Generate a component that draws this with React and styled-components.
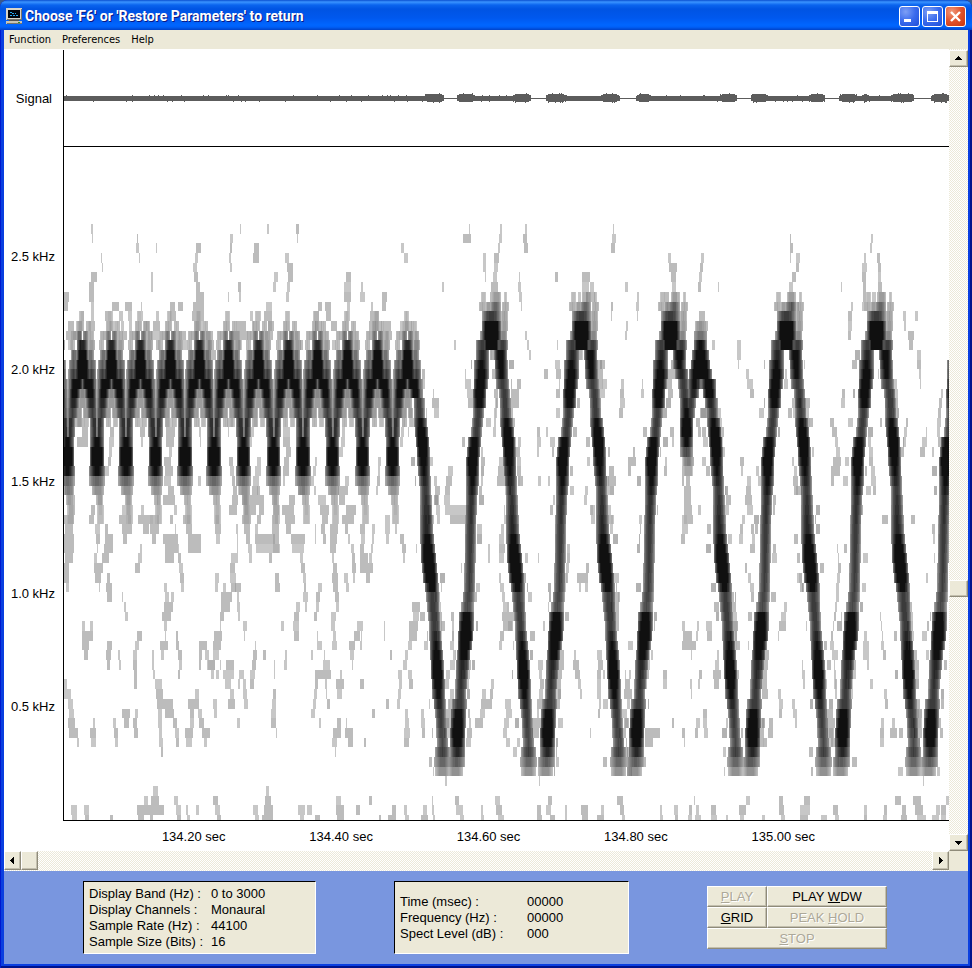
import React from "react";
import styled, { createGlobalStyle } from "styled-components";

const GlobalStyle = createGlobalStyle`
  * {
    box-sizing: border-box;
  }
  body {
    margin: 0;
    background: #3a5a8c;
    font-family: "Liberation Sans", Arial, sans-serif;
    font-size: 13px;
    line-height: 16px;
    color: #000;
  }
  button {
    font: inherit;
    color: inherit;
    border-radius: 0;
    padding: 0;
  }
`;

const Window = styled.div`
  display: flex;
  flex-direction: column;
  min-height: 100vh;
  padding: 0 4px 4px;
  border-radius: 8px 8px 0 0;
  background: #0a3fe0;
  box-shadow: inset 1px 0 #0019cf, inset -2px 0 #00138c, inset 0 -2px #00138c;
`;

const TitleBar = styled.header`
  display: flex;
  align-items: center;
  height: 30px;
  margin: 0 -4px;
  padding: 2px 6px 0 6px;
  border-radius: 8px 8px 0 0;
  background: linear-gradient(
    #0a4fd0 0,
    #3a93ff 2px,
    #0a64ee 5px,
    #0054e3 9px,
    #0058ee 18px,
    #0066ff 25px,
    #0060f8 27px,
    #0042c8 30px
  );
`;

const Title = styled.h1`
  flex: 1;
  margin: 0;
  padding-left: 3px;
  font-family: Roboto, sans-serif;
  font-size: 14px;
  font-weight: bold;
  line-height: 20px;
  color: #fff;
  text-shadow: 1px 1px #0a1883;
`;

const Caption = styled.button`
  width: 21px;
  height: 21px;
  margin-left: 2px;
  border: 1px solid #fff;
  border-radius: 3px;
  background: ${(p) =>
    p.$close
      ? "radial-gradient(circle at 30% 25%, #f0997c, #e1522c 50%, #c8340e)"
      : "radial-gradient(circle at 30% 25%, #7d9ff5, #3a6bed 50%, #1f4fd8)"};
  svg {
    display: block;
  }
`;

const MenuBar = styled.nav`
  display: flex;
  gap: 11px;
  height: 19px;
  padding-left: 5px;
  background: #ece9d8;
  button {
    border: 0;
    background: none;
    font-family: "DejaVu Sans Condensed", "DejaVu Sans", sans-serif;
    font-size: 11px;
    line-height: 18px;
  }
`;

const Workspace = styled.main`
  display: grid;
  flex: 1;
  grid-template-columns: minmax(0, 1fr) 19px;
  grid-template-rows: 1fr 20px;
  background: #ece9d8;
`;

const Display = styled.section`
  display: grid;
  grid-template-columns: 59px minmax(0, 1fr);
  grid-template-rows: 97px minmax(480px, 1fr) 30px;
  padding-top: 1px;
  background: #fff;
`;

const SignalLabel = styled.div`
  align-self: center;
  padding-right: 11px;
  text-align: right;
`;

const Plot = styled.div`
  min-width: 0;
  min-height: 0;
  border-left: 1px solid #000;
  border-bottom: 1px solid #000;
  svg {
    display: block;
    width: 100%;
    height: 0;
    min-height: 100%;
  }
`;

const FrequencyAxis = styled.div`
  display: grid;
  grid-auto-rows: 1fr;
  align-items: center;
  padding: 54px 8px 58px 0;
  text-align: right;
`;

const TimeAxis = styled.div`
  grid-column: 2;
  display: grid;
  grid-template-columns: repeat(5, 1fr);
  align-items: center;
  padding: 2px 92px 0 57px;
  text-align: center;
  white-space: nowrap;
`;

const Track = styled.div`
  display: flex;
  flex-direction: ${(p) => (p.$vertical ? "column" : "row")};
  justify-content: space-between;
  padding-top: ${(p) => (p.$vertical ? "1px" : "0")};
  background: repeating-conic-gradient(#fff 0 25%, #ece9d8 0 50%) 0 0 / 2px 2px;
`;

const raised = `
  border: 1px solid;
  border-color: #fff #8f8b7a #8f8b7a #fff;
  background: #ece9d8;
  box-shadow: inset -1px -1px #c3bfae;
`;

const ScrollButton = styled.button`
  ${raised}
  display: flex;
  align-items: center;
  justify-content: center;
  flex: none;
  width: ${(p) => (p.$vertical ? "19px" : "17px")};
  height: ${(p) => (p.$vertical ? "17px" : "19px")};
`;

const Thumb = styled.div`
  ${raised}
  width: ${(p) => (p.$vertical ? "19px" : "17px")};
  height: ${(p) => (p.$vertical ? "17px" : "19px")};
`;

const Travel = styled.div`
  display: flex;
  flex: 1;
  flex-direction: ${(p) => (p.$vertical ? "column" : "row")};
  &::before {
    content: "";
    flex: ${(p) => p.$before};
  }
  &::after {
    content: "";
    flex: ${(p) => p.$after};
  }
`;

const Footer = styled.footer`
  display: grid;
  grid-template-columns: 233px 235px 180px;
  justify-content: start;
  gap: 78px;
  height: 93px;
  padding: 10px 0 0 79px;
  background: #7996df;
`;

const Readout = styled.dl`
  display: grid;
  grid-template-columns: ${(p) => p.$label} 1fr;
  grid-auto-rows: 16px;
  align-content: center;
  height: 73px;
  margin: 0;
  padding-left: 5px;
  border: 1px solid;
  border-color: #000 #fff #fff #000;
  background: #ece9d8;
  white-space: nowrap;
  dd {
    margin: 0;
  }
`;

const Controls = styled.div`
  display: grid;
  grid-template-columns: 60px 120px;
  grid-auto-rows: 21px;
  align-content: start;
  padding-top: 5px;
`;

const ControlButton = styled.button`
  ${raised}
  grid-column: ${(p) => (p.$wide ? "span 2" : "auto")};
  &:disabled {
    color: #aca899;
    text-shadow: 1px 1px #fff;
  }
`;

const SIGNAL_BASE = 48;
const PLOT_WIDTH = 885;
const PLOT_HEIGHT = 673;
const ROWS = 62;
const SHADES = 18;

const random = (seed) => () => {
  seed = (seed * 1664525 + 1013904223) % 4294967296;
  return seed / 4294967296;
};

// [row, [centre offset, half width, strength], ...] around one small arch
const ARCH = {
  9: [[-1, 2, 0.1]],
  10: [[-2, 3, 0.2], [6, 2, 0.15]],
  11: [[-8, 3, 0.2], [-3, 2, 0.5], [3, 2, 0.5], [8, 3, 0.2]],
  12: [[0, 5, 0.9], [-10, 2, 0.15], [9, 3, 0.3]],
  13: [[0, 5, 1.3], [-8, 3, 0.5], [8, 3, 0.5]],
  14: [[0, 6, 1.5], [-9, 4, 0.6], [9, 4, 0.6]],
  15: [[0, 8, 1.2], [-9, 4, 0.75], [9, 4, 0.75]],
  16: [[-6, 6, 1.3], [6, 6, 1.3], [-12, 3, 0.5], [12, 3, 0.5], [0, 2, 0.5]],
  17: [[-8, 5, 1.1], [8, 5, 1.1], [-13, 2, 0.5], [13, 2, 0.5], [0, 3, 0.4]],
  18: [[-9, 5, 0.9], [9, 5, 0.9], [-13, 2, 0.5], [13, 2, 0.5], [0, 4, 0.3]],
  19: [[-10, 5, 0.75], [10, 5, 0.75], [-3, 2, 0.3], [3, 2, 0.3]],
  20: [[-12, 4, 0.85], [12, 4, 0.85], [-3, 2, 0.15], [4, 2, 0.12]],
  21: [[-13, 5, 0.85], [13, 5, 0.85]],
  22: [[-15, 6, 1], [15, 6, 1]],
  23: [[-15, 6, 1.5], [15, 6, 1.5]],
  24: [[-15, 6, 1.5], [15, 6, 1.5]],
  25: [[-15, 7, 1], [15, 7, 1]],
  26: [[-15, 7, 0.55], [15, 7, 0.55]],
  27: [[-14, 5, 0.35], [16, 5, 0.35]],
  28: [[17, 3, 0.2]],
  29: [[18, 3, 0.15]],
  30: [[18, 3, 0.12]],
};

const CREST = {
  7: [[-8, 2, 0.12], [5, 4, 0.2], [14, 1, 0.1]],
  8: [[-9, 3, 0.2], [-3, 2, 0.3], [4, 5, 0.55], [14, 3, 0.2]],
  9: [[0, 9, 0.8], [13, 3, 0.25]],
  10: [[0, 9, 1.4], [13, 3, 0.3]],
  11: [[0, 9, 1.5], [-9, 2, 0.4], [12, 3, 0.4]],
  12: [[0, 8, 1.3], [-9, 6, 0.8], [11, 5, 0.8]],
};

// [row, x offset, half width, strength] down either side of a tall crest
const RISING = [
  [13, -9, 6, 0.9], [14, -10, 7, 1], [15, -10, 7, 1.1], [17, -12, 6, 1.3],
  [18, -12, 6, 1.1], [19, -13, 5, 0.8], [21, -15, 5, 0.8], [22, -17, 6, 1.1],
  [24, -19, 6, 1.4], [26, -19, 6, 1], [28, -20, 5, 0.85], [31, -21, 5, 0.8],
  [37, -22, 5, 0.75], [39, -24, 6, 0.7], [40, -25, 7, 1.1], [42, -26, 7, 1.4],
  [44, -28, 6, 1.1], [45, -29, 6, 0.9], [48, -31, 5, 0.8], [49, -32, 7, 0.8],
  [50, -33, 7, 1.1], [52, -34, 7, 1.4], [54, -34, 7, 0.9], [55, -35, 8, 0.6],
  [56, -36, 7, 0.35],
];
const FALLING = [
  [13, 9, 6, 1.1], [15, 10, 6, 1], [16, 11, 6, 0.8], [17, 13, 5, 0.8],
  [19, 14, 5, 0.8], [20, 15, 6, 1], [22, 17, 6, 1.4], [24, 18, 6, 1.1],
  [27, 20, 5, 0.8], [31, 21, 6, 0.9], [34, 23, 7, 1.4], [36, 25, 7, 1.3],
  [38, 27, 6, 0.8], [41, 29, 5, 0.8], [44, 31, 6, 1.1], [46, 32, 6, 1.4],
  [48, 33, 6, 1], [50, 35, 5, 0.8], [53, 37, 5, 0.7], [54, 37, 7, 0.75],
  [55, 37, 8, 0.55], [56, 37, 7, 0.35],
];

const SMALL_CRESTS = [-12, 18, 47, 76, 106, 135, 164, 194, 224, 253, 283, 313, 343];
const TALL_CRESTS = [427, 517, 606, 722, 812];
const RISES = [427, 517, 606, 722, 812, 900];
const FALLS = [341, 427, 517, 634, 722, 812];

// faint echoes: x origin, then [first row, x, width, x, width, ...] going down
const ECHOES = [
  [-4, [
    [0, 31, 2, 32, 1], [0, 180, 1], [0, 207, 2], [0, 236, 3, 237, 1], [1, 170, 3, 170, 2, 169, 2, 170, 2],
    [1, 77, 1, 76, 3, 79, 1], [2, 96, 1], [2, 194, 5, 193, 6], [3, 41, 1, 42, 1],
    [2, 136, 5, 135, 3, 133, 4, 134, 4, 136, 4, 136, 8, 133, 11, 132, 12, 134, 9],
    [3, 225, 4, 227, 6, 228, 5, 227, 3, 226, 3], [5, 31, 6, 29, 5, 29, 5, 31, 3, 31, 3, 29, 6],
    [5, 91, 2, 91, 2], [5, 214, 4, 213, 3], [6, 178, 3, 179, 2], [7, 168, 1], [7, 4, 5, 4, 4],
    [5, 286, 5, 284, 7, 284, 7, 287, 3, 286, 4], [8, 52, 7, 45, 6, 50, 5], [8, 65, 7, 68, 4, 69, 3],
    [8, 110, 5, 110, 6], [8, 118, 5], [8, 206, 6, 204, 8, 208, 6], [8, 81, 1, 82, 1, 83, 7, 88, 5],
    [8, 258, 4, 253, 6, 255, 7], [8, 265, 6, 266, 5, 271, 6], [9, 21, 3, 16, 6, 14, 7, 17, 4],
    [9, 59, 4, 61, 3, 62, 5], [9, 96, 3, 93, 7, 91, 8, 96, 4], [10, 8, 6, 6, 8, 8, 5, 12, 2],
    [10, 176, 10, 174, 14, 178, 4, 186, 3], [9, 190, 3, 192, 2], [9, 199, 2, 208, 4, 205, 8],
    [11, 119, 7, 123, 4], [11, 146, 7, 148, 6, 150, 6], [11, 235, 5, 240, 3], [12, 272, 4, 277, 2],
    [20, 105, 8, 106, 9, 106, 8, 109, 3, 104, 7, 105, 8, 104, 7], [20, 80, 3, 80, 5, 81, 2],
    [20, 15, 10, 22, 6, 17, 11], [20, 138, 2, 139, 2, 140, 1], [20, 167, 6, 168, 1],
    [20, 192, 5, 191, 3, 190, 2], [21, 50, 4, 49, 5, 49, 3, 48, 3, 45, 4], [24, 197, 4, 195, 6, 193, 6, 192, 6],
    [24, 169, 4, 170, 4, 172, 3, 173, 4, 172, 6, 169, 8], [21, 223, 7, 223, 7, 226, 5, 224, 5, 223, 6, 223, 2],
    [21, 282, 3, 281, 4, 279, 4], [24, 255, 2, 253, 3, 251, 3, 254, 2], [26, 138, 3],
    [27, 5, 8, 7, 8, 9, 6, 4, 10, 5, 8, 4, 10, 4, 10, 5, 8, 4, 5, 4, 5, 6, 3],
    [27, 108, 6, 103, 12, 114, 3, 110, 3], [27, 178, 2, 182, 8, 184, 12, 182, 9, 184, 6, 186, 4, 188, 4, 189, 3],
    [27, 197, 3, 190, 14, 199, 5, 197, 4, 195, 3, 195, 20, 196, 24],
    [27, 238, 7, 229, 6, 222, 12, 225, 10, 226, 5, 231, 14, 232, 12, 240, 3, 241, 4, 243, 3, 244, 2, 243, 5, 245, 2],
    [26, 285, 4, 278, 10, 279, 6, 286, 10, 282, 12, 285, 3, 288, 2, 291, 3, 292, 3, 292, 4, 293, 2],
    [28, 38, 4, 31, 4, 29, 5, 35, 5, 36, 4, 37, 1, 34, 3, 34, 9, 35, 6, 39, 1],
    [28, 66, 5, 62, 8, 59, 12, 62, 10, 63, 4], [28, 97, 3, 81, 3, 78, 15, 83, 6],
    [28, 258, 8, 260, 9, 262, 6, 261, 4, 263, 3], [28, 212, 5, 213, 6, 212, 6, 212, 7, 213, 6, 213, 6, 209, 3],
    [30, 155, 4, 155, 6, 156, 4], [30, 90, 9, 90, 9, 92, 4], [30, 123, 8, 126, 6, 128, 13, 128, 13],
    [31, 45, 3, 45, 8, 44, 9, 42, 7], [36, 47, 3, 46, 6, 47, 5], [33, 80, 2, 78, 4, 75, 5],
    [31, 115, 1, 103, 15, 105, 13, 105, 9], [33, 118, 1, 118, 3, 119, 4, 120, 4, 121, 3],
    [38, 62, 1, 64, 2, 65, 3], [36, 155, 4, 155, 3],
    [31, 176, 2, 177, 1, 177, 1, 171, 7, 170, 5, 170, 6, 171, 5, 161, 11, 161, 9, 160, 4, 160, 1, 154, 8, 153, 8, 153, 6, 148, 7, 151, 3],
    [37, 163, 3], [37, 175, 6, 177, 2, 177, 3, 178, 2], [45, 160, 1, 156, 3], [36, 215, 4, 215, 5],
    [37, 258, 4, 256, 4, 256, 3, 254, 3],
    [31, 270, 8, 270, 7, 270, 6, 272, 2, 273, 4, 272, 6, 273, 5, 275, 4, 276, 3, 271, 5, 271, 4, 273, 3, 272, 5],
    [31, 255, 1, 255, 1], [36, 284, 4, 286, 3], [37, 104, 3, 105, 4, 104, 9, 102, 9, 104, 3, 105, 1, 100, 8, 101, 3],
    [38, 111, 3], [42, 116, 2, 116, 3, 118, 4, 119, 3, 118, 2], [41, 22, 3, 22, 11, 22, 7, 24, 4], [41, 30, 3],
    [43, 47, 5, 46, 5, 47, 3], [44, 58, 2, 59, 2], [42, 77, 5, 75, 4, 73, 4, 73, 4, 74, 3, 74, 3],
    [44, 92, 2, 92, 2, 93, 2, 95, 7, 96, 7, 97, 16, 98, 4, 98, 4, 99, 3, 99, 4, 101, 2],
    [50, 105, 9, 113, 4, 115, 4, 116, 3], [48, 135, 4, 128, 11, 130, 4, 130, 4, 125, 8, 126, 6],
    [50, 138, 4, 139, 5, 142, 8, 144, 3], [49, 153, 4, 154, 3], [51, 177, 3],
    [47, 4, 3, 4, 7, 8, 5, 9, 5, 8, 7, 9, 9, 17, 2], [51, 33, 2, 30, 6, 31, 5], [50, 62, 8, 64, 5],
    [50, 75, 3, 73, 4, 74, 4], [51, 53, 3, 54, 4, 55, 3], [43, 139, 8, 139, 3, 139, 2], [44, 145, 4, 147, 8],
    [45, 166, 8, 163, 11, 165, 6, 170, 4, 168, 7], [46, 179, 5, 178, 2], [47, 183, 3, 183, 4, 184, 4],
    [43, 195, 1, 193, 4, 192, 4, 190, 5, 190, 4], [44, 203, 3], [41, 221, 3], [44, 225, 2, 224, 3],
    [45, 214, 1, 214, 1], [39, 236, 4, 234, 5, 233, 6, 234, 5], [41, 183, 4, 184, 1],
    [42, 257, 1, 257, 5, 251, 2], [44, 264, 1, 263, 7, 255, 16, 255, 3, 254, 3, 253, 3, 251, 4], [47, 265, 2, 266, 1, 267, 3],
    [46, 280, 2, 276, 8, 277, 5], [48, 213, 3, 212, 4, 211, 5, 211, 5, 216, 1],
    [51, 277, 4, 273, 8, 272, 5, 275, 1], [51, 286, 1, 285, 8, 288, 5], [51, 259, 2],
    [41, 297, 3, 294, 6, 289, 6, 290, 4, 292, 1], [58, 93, 5, 91, 8, 84, 20, 90, 3], [59, 84, 4, 77, 7, 78, 6],
    [60, 11, 6, 12, 5], [60, 24, 5, 25, 4], [61, 50, 3], [59, 114, 4, 116, 5, 117, 4], [60, 126, 2, 127, 3],
    [60, 136, 3], [59, 153, 5, 155, 5, 157, 4], [58, 206, 3, 205, 6, 204, 9, 202, 11], [60, 193, 5, 195, 4],
    [60, 238, 7, 240, 4], [60, 247, 5, 255, 5], [59, 276, 5, 276, 8, 277, 7], [60, 296, 4],
  ]],
  [296, [
    [0, 109, 1, 103, 8], [0, 140, 2, 139, 3, 138, 2, 134, 5, 134, 4, 133, 4, 131, 7, 130, 10],
    [2, 41, 3, 44, 4], [3, 123, 3, 123, 3, 125, 1], [0, 165, 2, 163, 4, 164, 4], [0, 253, 1, 252, 4, 251, 4],
    [6, 82, 2], [5, 159, 1, 158, 3, 159, 3, 161, 1], [6, 1, 2, 0, 5], [7, 22, 5, 22, 4], [8, 11, 2, 10, 9, 9, 13],
    [5, 222, 8, 222, 7, 226, 9], [6, 230, 4, 218, 3], [5, 195, 3], [6, 265, 3], [7, 277, 2, 276, 3, 277, 1],
    [8, 251, 2, 251, 1], [10, 266, 2, 265, 2], [9, 46, 1, 45, 7], [10, 40, 2], [10, 26, 5, 26, 6],
    [10, 56, 1, 55, 4, 54, 5], [11, 165, 2, 167, 2, 169, 2], [12, 94, 2], [12, 197, 1], [15, 184, 4],
    [15, 105, 1, 105, 6, 107, 6, 108, 5], [16, 157, 4, 151, 8, 150, 9, 150, 3], [14, 238, 7, 238, 5, 239, 4, 240, 5],
    [17, 73, 1, 72, 7, 74, 5], [15, 62, 3, 63, 2], [16, 261, 3, 260, 4, 260, 5, 259, 4], [16, 282, 1, 281, 3],
    [21, 177, 3, 177, 4, 177, 2], [21, 186, 2], [23, 273, 2, 268, 8, 268, 3], [24, 69, 4],
    [25, 88, 5, 86, 6, 85, 5, 84, 6, 85, 22, 90, 15], [26, 74, 3, 75, 5, 75, 4, 76, 4, 77, 3],
    [29, 68, 3, 68, 4], [18, 135, 2, 135, 1, 134, 2, 133, 3], [24, 139, 4, 138, 8, 137, 12, 145, 6],
    [22, 158, 3, 157, 3, 157, 4, 157, 4, 158, 5], [26, 178, 3], [26, 188, 2], [26, 246, 10, 247, 3],
    [27, 225, 3, 224, 3], [24, 18, 3, 18, 2, 17, 3, 16, 2], [20, 42, 3, 41, 3, 40, 3], [21, 48, 1],
    [29, 144, 1, 144, 3], [29, 230, 3, 231, 4], [29, 248, 3, 249, 4],
    [31, 0, 5, 1, 4, 0, 4, 0, 8, 0, 13, 6, 4], [31, 12, 3, 12, 2, 11, 2, 9, 3], [30, 25, 5, 25, 5, 26, 3],
    [31, 35, 2, 40, 4, 42, 4, 43, 2], [39, 52, 8, 53, 6, 49, 9, 49, 8, 48, 4], [41, 24, 1, 24, 1],
    [41, 0, 3, 1, 1, 0, 2], [44, 30, 2], [44, 45, 3, 43, 4, 38, 4, 39, 3, 38, 3, 37, 3], [46, 48, 4, 49, 4],
    [47, 0, 4], [49, 26, 3, 45, 3, 45, 4, 44, 6, 44, 5], [50, 12, 3], [50, 61, 3, 61, 4, 62, 3], [53, 4, 2],
    [47, 131, 3, 130, 3, 121, 11, 120, 5, 115, 8], [48, 122, 4], [49, 145, 6, 146, 6, 144, 5, 143, 4, 146, 4],
    [31, 141, 3, 139, 5, 139, 6, 139, 5], [36, 139, 2, 140, 4, 142, 3, 143, 4, 142, 12, 143, 9, 140, 4, 139, 3],
    [33, 207, 3, 207, 3, 206, 3, 204, 3, 204, 2], [34, 178, 1], [35, 226, 3, 217, 11, 225, 3], [37, 219, 2],
    [44, 214, 2, 213, 6, 215, 5, 218, 3, 220, 2], [45, 238, 5, 237, 4, 237, 4, 237, 4, 239, 2, 238, 2],
    [52, 230, 1], [52, 285, 15, 285, 8], [46, 265, 1, 265, 5, 264, 8, 267, 3], [57, 85, 2], [57, 179, 1],
    [33, 128, 2, 128, 2], [40, 91, 3, 92, 2], [44, 93, 2, 90, 5, 86, 4, 84, 5, 90, 4], [49, 88, 6, 86, 6, 87, 5, 84, 6],
    [45, 178, 5, 179, 3, 180, 4, 179, 4, 177, 5], [51, 173, 8, 172, 7], [52, 259, 7, 260, 4],
    [37, 74, 2, 75, 5, 77, 4, 76, 6, 77, 5, 78, 4], [42, 103, 9, 104, 8, 105, 5, 106, 5, 104, 6, 105, 4],
    [44, 196, 8, 197, 7, 196, 6, 195, 6, 194, 7, 194, 6], [44, 287, 3, 286, 4, 285, 4, 284, 3],
    [37, 250, 3, 251, 8, 251, 8, 252, 7, 254, 5], [51, 109, 2, 107, 5, 106, 5, 103, 2],
    [59, 9, 3], [59, 72, 1, 72, 2, 73, 2], [59, 95, 4, 96, 7, 100, 4], [59, 135, 5, 136, 6, 138, 6],
    [59, 188, 4, 186, 5, 190, 5], [59, 257, 6, 260, 4, 262, 3], [60, 32, 4, 28, 8], [60, 44, 3, 45, 4],
    [60, 63, 4, 61, 7], [60, 121, 2, 121, 3], [60, 177, 4, 177, 5], [60, 205, 2, 205, 2],
    [60, 221, 7, 222, 6], [60, 241, 3, 237, 7], [61, 19, 2],
  ]],
  [596, [
    [3, 8, 3, 9, 8, 11, 5, 12, 4, 12, 5], [7, 4, 5, 5, 11], [3, 41, 3, 40, 3, 39, 3, 38, 3], [6, 58, 1],
    [1, 130, 1, 130, 3, 136, 4, 136, 3, 132, 4, 129, 4, 128, 6, 131, 8], [3, 130, 1],
    [12, 77, 4, 77, 4, 78, 1, 86, 3, 87, 6, 90, 4], [9, 39, 6, 36, 12, 34, 13, 34, 11], [12, 52, 3],
    [1, 211, 2, 210, 2, 204, 2, 202, 5, 202, 4, 203, 3, 203, 3, 202, 3],
    [3, 217, 3, 218, 3, 218, 3, 218, 4, 219, 6], [7, 212, 4], [6, 181, 1], [8, 191, 2, 188, 4, 188, 4, 188, 3],
    [17, 182, 3, 181, 4], [20, 170, 4, 172, 5, 175, 3, 176, 4, 173, 8, 171, 9, 171, 3], [9, 243, 3, 244, 2],
    [9, 255, 3], [11, 248, 6, 249, 4, 257, 4, 257, 4, 259, 2, 260, 1], [20, 246, 2, 244, 3, 243, 3],
    [21, 266, 1, 262, 5, 260, 5], [23, 272, 2], [24, 80, 4, 81, 2], [24, 5, 2, 4, 3],
    [26, 87, 4, 86, 5, 85, 7, 87, 6], [30, 82, 3], [25, 96, 3, 98, 3], [26, 26, 4, 24, 7, 24, 7, 24, 8, 24, 9],
    [24, 22, 9, 22, 10, 22, 2], [24, 132, 2, 134, 3, 133, 5, 134, 8],
    [22, 208, 3, 209, 4, 209, 4, 211, 4, 211, 5, 213, 3], [30, 222, 6], [30, 251, 4],
    [19, 278, 3, 277, 4, 277, 3, 278, 5], [15, 6, 9, 7, 5, 8, 5], [21, 10, 4, 12, 2],
    [15, 41, 3, 38, 4], [19, 41, 7, 36, 4, 38, 3], [27, 65, 1, 66, 5, 65, 4], [29, 38, 3],
    [18, 132, 9, 133, 2], [16, 124, 4], [18, 144, 6, 144, 5, 145, 5], [16, 234, 3, 232, 6, 232, 6, 233, 6],
    [19, 58, 3, 57, 5, 58, 6, 57, 6, 60, 5], [30, 22, 5, 22, 6, 21, 4], [31, 80, 3, 79, 4], [31, 91, 3, 92, 3, 90, 5],
    [35, 85, 2, 88, 3, 90, 4, 91, 3], [36, 137, 5, 140, 3],
    [33, 177, 1, 178, 1, 178, 3, 177, 3, 176, 3, 176, 3, 175, 2, 174, 2, 173, 1, 171, 2, 170, 4, 172, 2, 174, 1, 174, 2, 174, 2, 175, 2],
    [39, 124, 3, 121, 5, 119, 7, 118, 1], [41, 22, 3, 23, 9, 22, 14, 31, 1], [41, 37, 2, 36, 2], [41, 46, 6, 47, 5],
    [42, 204, 3, 203, 6, 203, 6, 207, 2], [46, 39, 3, 38, 2], [46, 3, 4, 3, 4], [47, 30, 2, 31, 1],
    [40, 220, 1, 221, 1, 222, 1, 221, 3, 223, 3], [47, 210, 3], [45, 142, 1, 142, 3, 143, 2],
    [48, 224, 3, 225, 3], [48, 118, 3, 119, 4, 119, 3], [49, 132, 3, 133, 4, 135, 2],
    [50, 43, 4, 43, 4, 44, 4], [51, 12, 2], [51, 36, 4, 35, 3], [51, 109, 4, 108, 5], [51, 221, 3, 220, 4, 220, 4],
    [51, 232, 3, 230, 7], [52, 22, 3, 24, 1], [57, 263, 1], [36, 266, 2],
    [38, 70, 4, 71, 5, 71, 6, 71, 6, 70, 7, 71, 6], [44, 57, 2, 55, 4, 53, 8, 54, 5], [44, 103, 6, 101, 7, 100, 7, 101, 6, 104, 4],
    [45, 190, 6, 190, 6, 188, 5, 190, 3], [51, 99, 5, 98, 6, 96, 8], [50, 166, 7, 167, 8, 167, 7, 168, 5],
    [38, 247, 3, 248, 4, 249, 4, 247, 6, 249, 5, 249, 4, 252, 5, 255, 4, 253, 6], [49, 256, 4, 255, 4, 253, 8, 254, 8],
    [59, 34, 1, 36, 3, 35, 6], [59, 86, 4, 79, 7, 80, 4], [59, 119, 4, 119, 5, 121, 4],
    [59, 144, 6, 140, 10, 140, 8], [59, 235, 6, 242, 4, 241, 6], [59, 253, 8, 255, 8, 257, 9], [59, 286, 3, 281, 5, 281, 5],
    [60, 0, 2, 0, 3], [60, 14, 4, 15, 3], [60, 29, 3, 28, 4], [60, 51, 5, 51, 6], [61, 66, 2], [60, 173, 5, 175, 4],
    [60, 204, 3, 204, 3], [60, 224, 3, 223, 4], [60, 276, 4, 272, 7], [61, 102, 3], [61, 161, 6],
  ]],
];

const rowTop = (row) => Math.min(PLOT_HEIGHT, Math.round(77 + row * 9.69));

const flankAt = (flank, row) => {
  const next = flank.findIndex((stop) => stop[0] >= row);
  if (flank[next][0] === row) return flank[next].slice(1);
  const a = flank[next - 1];
  const b = flank[next];
  const t = (row - a[0]) / (b[0] - a[0]);
  return [1, 2, 3].map((i) => a[i] + (b[i] - a[i]) * t);
};

// One path per shade of grey, each made of the runs of cells in that shade.
const buildSpectrogram = () => {
  const next = random(41);
  const cells = Array.from({ length: ROWS }, () => new Float32Array(PLOT_WIDTH));

  const band = (row, x, half, strength) => {
    for (let i = Math.round(x - half); i <= Math.round(x + half); i++) {
      if (i < 0 || i >= PLOT_WIDTH) continue;
      const u = (i - x) / (half + 1);
      const value = Math.min(1, strength * (1 - 0.8 * u * u));
      cells[row][i] = Math.max(cells[row][i], value);
    }
  };
  const speck = (row, x, width, value) => {
    for (let i = Math.max(0, x); i < Math.min(PLOT_WIDTH, x + width); i++) {
      cells[row][i] = Math.min(1, cells[row][i] + value);
    }
  };

  const lastSmall = SMALL_CRESTS[SMALL_CRESTS.length - 1];
  SMALL_CRESTS.forEach((crest) => {
    Object.entries(ARCH).forEach(([row, bands]) => {
      bands.forEach(([dx, half, strength]) => {
        // the last arch falls away instead of turning up again
        if (crest === lastSmall && dx > 4 && +row > 17) return;
        band(+row, crest + dx, half, strength);
      });
    });
  });
  // thin pale seam where two small arches meet
  SMALL_CRESTS.slice(1).forEach((crest) => {
    for (let row = 12; row <= 21; row++) {
      const x = crest - 15;
      cells[row][x] = row < 16 ? 0 : 0.15 + (row - 16) * 0.06;
      cells[row][x + 1] = row < 15 ? 0 : 0.3 + (row - 16) * 0.04;
    }
  });
  TALL_CRESTS.forEach((crest) => {
    Object.entries(CREST).forEach(([row, bands]) => {
      bands.forEach(([dx, half, strength]) => band(+row, crest + dx, half, strength));
    });
  });

  const fringe = (row, x, half) => {
    if (next() < 0.5) {
      const width = 1 + Math.floor(next() * 5);
      const side = next() < 0.5 ? -1 : 1;
      const at = Math.round(x + side * (half + 1 + next() * 3)) - (side < 0 ? width : 0);
      speck(row, at, width, 0.04 + next() * 0.14);
    }
  };
  RISES.forEach((crest) => {
    for (let row = 13; row <= 56; row++) {
      const [dx, half, strength] = flankAt(RISING, row);
      band(row, crest + dx, half, strength);
      fringe(row, crest + dx, half);
    }
  });
  FALLS.forEach((crest) => {
    for (let row = crest === 341 || crest === 634 ? 18 : 13; row <= 56; row++) {
      const [dx, half, strength] = flankAt(FALLING, row);
      band(row, crest + dx, half, strength);
      fringe(row, crest + dx, half);
    }
  });

  // the double crest near 134.85 sec
  [[10, 0, 5, 0.2], [11, 0, 6, 0.4], [12, 0, 6, 0.9], [13, 0, 8, 1.2], [14, 0, 9, 1.5], [15, 0, 11, 1.4],
    [16, -6, 6, 1], [16, 8, 7, 1.1], [17, -7, 5, 0.9], [17, 9, 6, 1.2], [18, -10, 5, 0.8], [18, 10, 5, 0.9],
    [19, -11, 5, 0.8], [19, 3, 3, 0.2]].forEach(([row, dx, half, s]) => band(row, 636 + dx, half, s));
  [[13, 615, 6, 1.1], [14, 615, 6, 1], [15, 617, 6, 0.9], [16, 619, 5, 0.8], [17, 620, 5, 0.8],
    [18, 621, 5, 0.9], [19, 622, 6, 1], [20, 622, 6, 1.3], [21, 622, 6, 1.4], [22, 622, 6, 1],
    [23, 622, 6, 0.7], [24, 624, 5, 0.35], [25, 624, 4, 0.15]].forEach((cell) => band(...cell));

  ECHOES.forEach(([origin, trails]) => {
    trails.forEach(([first, ...spans]) => {
      for (let i = 0; i < spans.length; i += 2) {
        const width = spans[i + 1];
        speck(first + i / 2, origin + spans[i], width, 0.03 + next() * 0.05 + Math.min(width, 8) * 0.006);
      }
    });
  });

  const paths = Array.from({ length: SHADES + 1 }, () => "");
  const level = (v) => (v > 0 ? Math.max(1, Math.round(v * SHADES)) : 0);
  cells.forEach((line, row) => {
    const top = rowTop(row);
    const height = rowTop(row + 1) - top;
    let start = 0;
    for (let x = 1; x <= PLOT_WIDTH; x++) {
      const shade = level(line[start]);
      if (x === PLOT_WIDTH || level(line[x]) !== shade) {
        if (shade) paths[shade] += `M${start} ${top}h${x - start}v${height}h${start - x}z`;
        start = x;
      }
    }
  });
  return paths;
};

// louder stretches of the recording and the near-silent gaps between them
const LOUD = [[361, 380], [393, 411], [449, 467], [482, 502], [537, 555], [573, 587], [656, 673],
  [687, 704], [745, 761], [776, 793], [798, 805], [827, 850], [868, 885]];
const QUIET = [[380, 393], [467, 482], [556, 572], [673, 687], [761, 775], [850, 867]];

const buildSignal = () => {
  const next = random(7);
  const inside = (list, x) => list.some(([from, to]) => x >= from && x < to);
  let d = "";
  for (let x = 0; x < PLOT_WIDTH; x++) {
    let up = next() < 0.05 ? 3 : 2;
    let down = next() < 0.05 ? 4 : 3;
    if (inside(QUIET, x)) {
      up = 0;
      down = 1;
    } else if (inside(LOUD, x)) {
      const full = inside(LOUD, x - 2) && inside(LOUD, x + 2) ? 1 : 0;
      up = 3 + full + (next() < 0.1 ? 1 : 0);
      down = 3 + full + (next() < 0.1 ? 1 : 0);
    }
    d += `M${x} ${SIGNAL_BASE - up}h1v${up + down}h-1z`;
  }
  return d;
};

const SPECTROGRAM = buildSpectrogram();
const SIGNAL = buildSignal();

const shadeColor = (shade) => {
  const v = Math.round(210 - (194 * shade) / SHADES);
  return `rgb(${v}, ${v}, ${v})`;
};

const AppIcon = () => (
  <svg width="16" height="16" viewBox="0 0 16 16" shapeRendering="crispEdges" aria-hidden="true">
    <path d="M0 0h16v12H0z" fill="#d8d4c8" />
    <path d="M15 1h1v11H1v-1h14z" fill="#77756c" />
    <path d="M2 2h12v8H2z" fill="#02060c" />
    <path d="M4 4h2v1H4zM6 5h2v1H6zM9 5h1v1H9zM4 7h2v1H4zM7 7h2v1H7zM10 7h2v1h-2z" fill="#28a8f0" />
    <path d="M3 12h10v1H3z" fill="#55534c" />
    <path d="M0 13h16v3H0z" fill="#c8c4b4" />
    <path d="M1 15h15v1H1z" fill="#77756c" />
    <path d="M12 14h2v1h-2z" fill="#2c8c30" />
  </svg>
);

const ARROWS = {
  up: "M4 2h1v1h1v1h1v1h1v1H1V5h1V4h1V3h1z",
  down: "M1 3h7v1H7v1H6v1H5v1H4V6H3V5H2V4H1z",
  left: "M6 1v7H5V7H4V6H3V5H2V4h1V3h1V2h1V1z",
  right: "M3 1h1v1h1v1h1v1h1v1H6v1H5v1H4v1H3z",
};

const Scroll = ({ direction, label, $vertical }) => (
  <ScrollButton type="button" aria-label={label} $vertical={$vertical}>
    <svg width="9" height="9" viewBox="0 0 9 9" shapeRendering="crispEdges">
      <path d={ARROWS[direction]} />
    </svg>
  </ScrollButton>
);

const App = () => {
  return (
    <>
      <GlobalStyle />
      <Window>
        <TitleBar>
          <AppIcon />
          <Title>Choose 'F6' or 'Restore Parameters' to return</Title>
          <Caption type="button" aria-label="Minimize">
            <svg width="19" height="19" viewBox="0 0 19 19">
              <path d="M4 12h7v3H4z" fill="#fff" />
            </svg>
          </Caption>
          <Caption type="button" aria-label="Maximize">
            <svg width="19" height="19" viewBox="0 0 19 19">
              <path d="M4 4h11v11H4zM5 7v7h9V7z" fill="#fff" fillRule="evenodd" />
            </svg>
          </Caption>
          <Caption type="button" aria-label="Close" $close>
            <svg width="19" height="19" viewBox="0 0 19 19">
              <path d="M5 5l9 9M14 5l-9 9" stroke="#fff" strokeWidth="2.4" />
            </svg>
          </Caption>
        </TitleBar>
        <MenuBar>
          <button type="button">Function</button>
          <button type="button">Preferences</button>
          <button type="button">Help</button>
        </MenuBar>
        <Workspace>
          <Display>
            <SignalLabel>Signal</SignalLabel>
            <Plot>
              <svg viewBox="0 0 885 96" preserveAspectRatio="none" shapeRendering="crispEdges" role="img" aria-label="Signal">
                <path d={SIGNAL} fill="#5c5c5c" />
              </svg>
            </Plot>
            <FrequencyAxis>
              {["2.5", "2.0", "1.5", "1.0", "0.5"].map((f) => (
                <span key={f}>{f} kHz</span>
              ))}
            </FrequencyAxis>
            <Plot>
              <svg viewBox="0 0 885 673" preserveAspectRatio="none" shapeRendering="crispEdges" role="img" aria-label="Spectrogram">
                {SPECTROGRAM.map((d, shade) => d && <path key={shade} d={d} fill={shadeColor(shade)} />)}
              </svg>
            </Plot>
            <TimeAxis>
              {["134.20", "134.40", "134.60", "134.80", "135.00"].map((t) => (
                <span key={t}>{t} sec</span>
              ))}
            </TimeAxis>
          </Display>
          <Track $vertical>
            <Scroll direction="up" label="Scroll up" $vertical />
            <Travel $vertical $before={514} $after={238}>
              <Thumb $vertical />
            </Travel>
            <Scroll direction="down" label="Scroll down" $vertical />
          </Track>
          <Track>
            <Scroll direction="left" label="Scroll left" />
            <Travel $before={0} $after={1}>
              <Thumb />
            </Travel>
            <Scroll direction="right" label="Scroll right" />
          </Track>
        </Workspace>
        <Footer>
          <Readout $label="122px">
            <dt>Display Band (Hz) :</dt>
            <dd>0 to 3000</dd>
            <dt>Display Channels :</dt>
            <dd>Monaural</dd>
            <dt>Sample Rate (Hz) :</dt>
            <dd>44100</dd>
            <dt>Sample Size (Bits) :</dt>
            <dd>16</dd>
          </Readout>
          <Readout $label="127px">
            <dt>Time (msec) :</dt>
            <dd>00000</dd>
            <dt>Frequency (Hz) :</dt>
            <dd>00000</dd>
            <dt>Spect Level (dB) :</dt>
            <dd>000</dd>
          </Readout>
          <Controls>
            <ControlButton type="button" disabled>
              <u>P</u>LAY
            </ControlButton>
            <ControlButton type="button">
              PLAY <u>W</u>DW
            </ControlButton>
            <ControlButton type="button">
              <u>G</u>RID
            </ControlButton>
            <ControlButton type="button" disabled>
              PEAK <u>H</u>OLD
            </ControlButton>
            <ControlButton type="button" disabled $wide>
              <u>S</u>TOP
            </ControlButton>
          </Controls>
        </Footer>
      </Window>
    </>
  );
};

export default App;
